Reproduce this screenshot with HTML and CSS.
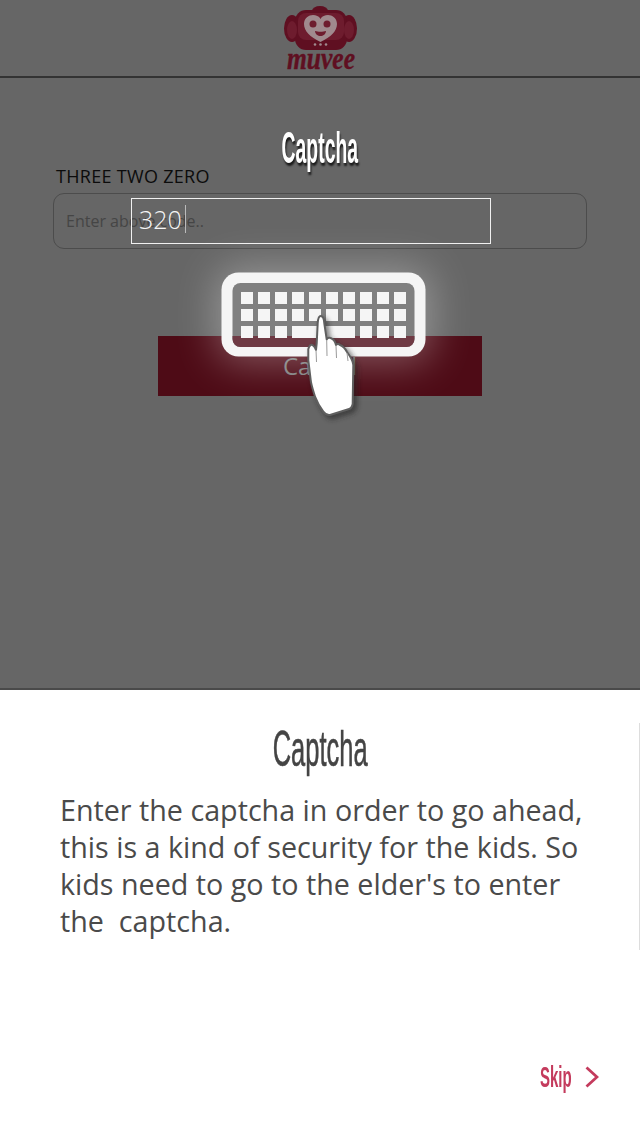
FILE: index.html
```html
<!DOCTYPE html>
<html lang="en">
<head>
<meta charset="utf-8">
<title>Captcha</title>
<link rel="stylesheet" href="styles.css">
</head>
<body>
<div class="screen">
  <section class="stage">
    <header class="topbar">
      <svg class="logo" viewBox="0 0 80 76" width="80" height="76">
        <g fill="#5f0f21">
          <ellipse cx="12" cy="28.500" rx="8" ry="13.500"/>
          <ellipse cx="69" cy="28.500" rx="8" ry="13.500"/>
          <ellipse cx="40" cy="11" rx="8" ry="5"/>
          <rect x="15" y="10" width="52" height="40" rx="11"/>
        </g>
        <g fill="#6e1c2e">
          <ellipse cx="12" cy="30" rx="5" ry="9"/>
          <ellipse cx="69" cy="30" rx="5" ry="9"/>
          <rect x="18" y="13" width="46" height="27" rx="8"/>
        </g>
        <path d="M40.500 42C30 37 24 31 24 24C24 18 29 15 33 15C36 15 39 16 40.500 19C42 16 45 15 48 15C52 15 57 18 57 24C57 31 51 37 40.500 42Z" fill="#a08a8e"/>
        <circle cx="33" cy="24" r="3.500" fill="#6e1c2e"/>
        <circle cx="47" cy="24" r="3.500" fill="#6e1c2e"/>
        <path d="M35 31C38 32 43 32 46 31C46 34 43 36 40.500 36C38 36 35 34 35 31Z" fill="#6e1c2e"/>
        <g fill="#a08a8e"><circle cx="35" cy="44.500" r="1.300"/><circle cx="40.500" cy="44.500" r="1.300"/><circle cx="46" cy="44.500" r="1.300"/></g>
        <text class="logo-word" x="7" y="69" textLength="68" lengthAdjust="spacingAndGlyphs">muvee</text>
      </svg>
    </header>
    <div class="form">
      <h1 class="stage-title"><span class="squeeze">Captcha</span></h1>
      <p class="code-label">THREE TWO ZERO</p>
      <div class="field">Enter above code..</div>
      <div class="submit">Cancel</div>
    </div>
    <div class="typed"><span class="typed-value">320</span><span class="caret"></span></div>
    <svg class="keyboard" viewBox="0 0 240 180" width="240" height="180">
      <defs>
        <filter id="bloom" filterUnits="userSpaceOnUse" x="-80" y="-60" width="400" height="300"><feGaussianBlur stdDeviation="20"/></filter>
        <filter id="soft" filterUnits="userSpaceOnUse" x="70" y="40" width="100" height="140"><feGaussianBlur stdDeviation="2.500"/></filter>
        <path id="hand" d="M111.700 64C113.500 64 115 67 115.300 71.300L117.700 87.300C119 85.500 121 85.500 122 86.300C124 87 126 89 127 93C128 91.500 130 92 131 93C134 94 137 98 138 100C141 104 144 108 144.300 113L143.700 152C143 155 141 157 139.300 157.300L121 163C118 163.500 116 162 114.300 159.700C110 154 108 150 106 144.700C104 138 102 132 101.700 128L99.300 108L99.300 97.300C100 94 102 92 103.500 93C105 94 106.500 96 107 98L107.700 91.300L108.700 71.300C109 67 110 64 111.700 64Z"/>
      </defs>
      <rect x="8" y="16" width="214" height="94" rx="20" fill="#fff" opacity=".32" filter="url(#bloom)"/>
      <rect x="12.500" y="20.500" width="204" height="84" rx="17" fill="#f5f5f5"/>
      <rect x="23.500" y="31" width="182" height="64" rx="8" fill="#808080"/>
      <path d="M23.500 84V87A8 8 0 0 0 31.500 95H197.500A8 8 0 0 0 205.500 87V84Z" fill="#6f3a44"/>
      <g fill="#f5f5f5">
        <rect x="32" y="40" width="12" height="12"/><rect x="49" y="40" width="12" height="12"/><rect x="66" y="40" width="12" height="12"/><rect x="83" y="40" width="12" height="12"/><rect x="100" y="40" width="12" height="12"/><rect x="117" y="40" width="12" height="12"/><rect x="134" y="40" width="12" height="12"/><rect x="151" y="40" width="12" height="12"/><rect x="168" y="40" width="12" height="12"/><rect x="185" y="40" width="12" height="12"/>
        <rect x="32" y="57" width="12" height="12"/><rect x="49" y="57" width="12" height="12"/><rect x="66" y="57" width="12" height="12"/><rect x="83" y="57" width="12" height="12"/><rect x="100" y="57" width="12" height="12"/><rect x="117" y="57" width="12" height="12"/><rect x="134" y="57" width="12" height="12"/><rect x="151" y="57" width="12" height="12"/><rect x="168" y="57" width="12" height="12"/><rect x="185" y="57" width="12" height="12"/>
        <rect x="32" y="74" width="12" height="12"/><rect x="49" y="74" width="12" height="12"/><rect x="66" y="74" width="12" height="12"/><rect x="83" y="74" width="63" height="12"/><rect x="151" y="74" width="12" height="12"/><rect x="168" y="74" width="12" height="12"/><rect x="185" y="74" width="12" height="12"/>
      </g>
      <use href="#hand" fill="#222" stroke="#222" stroke-width="3" transform="translate(3 3)" filter="url(#soft)" opacity=".55"/>
      <use href="#hand" fill="#fff" stroke="#5f5f5f" stroke-width="2" stroke-linejoin="round"/>
      <path d="M117.700 88L118 104M127 94L127.500 106M138 101L139 109M107 98L107.500 110" fill="none" stroke="#9a9a9a" stroke-width="1"/>
    </svg>
  </section>
  <section class="help">
    <h2 class="help-title"><span class="squeeze">Captcha</span></h2>
    <p class="help-text">Enter the captcha in order to go ahead,<br>this is a kind of security for the kids. So<br>kids need to go to the elder's to enter<br>the&nbsp; captcha.</p>
    <div class="skip">
      <span class="skip-label">Skip</span>
      <svg class="chev" viewBox="0 0 14 22" width="14" height="22"><path d="M1.500 1.500L12 11L1.500 20.500" fill="none" stroke="#c43b5d" stroke-width="2.800"/></svg>
    </div>
  </section>
</div>
</body>
</html>
```
FILE: styles.css
```css
* { box-sizing: border-box; }
html, body { margin: 0; padding: 0; }
body { width: 640px; height: 1136px; overflow: hidden; background: #fff; font-family: "Open Sans", "Noto Sans", sans-serif; }
.screen { display: flex; flex-direction: column; height: 1136px; }
.stage { position: relative; height: 690px; flex: none; background: #666; border-bottom: 2px solid #4a4a4a; }
.topbar { height: 78px; border-bottom: 2px solid #333; display: flex; justify-content: center; }
.logo { overflow: visible; }
.logo-word { font-family: "Liberation Serif", serif; font-weight: bold; font-style: italic; font-size: 31px; fill: #5f0f21; stroke: #5f0f21; stroke-width: .4px; }
.form { display: flex; flex-direction: column; align-items: flex-start; padding: 0 53px; }
.stage-title { width: 100%; margin: 46px 0 0; height: 42px; text-align: center; font: bold 44px/48px "Liberation Sans", sans-serif; color: #fff; text-shadow: 2px 3px 3px rgba(0,0,0,.75); }
.squeeze { display: inline-block; transform: scaleX(.44); }
.code-label { margin: 0 0 0 3px; height: 20px; font-size: 18px; line-height: 20px; color: #0c0c0c; letter-spacing: .3px; white-space: nowrap; }
.field { width: 534px; height: 56px; margin-top: 7px; border: 1px solid #4c4c4c; border-radius: 11px; padding-left: 12px; font-size: 16px; line-height: 54px; color: #454545; }
.submit { width: 324px; height: 60px; margin: 87px 0 0 105px; background: #4e0b16; color: #7f7f7f; font-size: 24px; line-height: 60px; text-align: center; }
.typed { position: absolute; left: 131px; top: 198px; width: 360px; height: 46px; border: 1px solid #f0f0f0; padding: 0 0 5px 7px; display: flex; align-items: center; color: #f5f5f5; font-size: 25px; font-weight: 300; }
.caret { width: 1px; height: 28px; margin-left: 3px; background: #bbb; }
.keyboard { position: absolute; left: 209px; top: 252px; overflow: visible; }
.help { position: relative; flex: 1; padding: 0 0 0 60px; }
.help::after { content: ""; position: absolute; right: 0; top: 33px; width: 1px; height: 227px; background: #ddd; }
.help-title { width: 520px; margin: 31px 0 0; height: 56px; text-align: center; font: normal 50px/56px "Liberation Sans", sans-serif; color: #444; -webkit-text-stroke: .6px #444; }
.help-title .squeeze { transform: scaleX(.51); }
.help-text { margin: 14px 0 0; font-size: 28.700px; line-height: 37px; color: #4a4a4a; white-space: nowrap; }
.skip { position: absolute; left: 540px; top: 369px; display: flex; align-items: center; gap: 13px; }
.skip-label { display: inline-block; width: 32px; font: bold 30px/36px "Liberation Sans", sans-serif; color: #c43b5d; transform: scaleX(.5); transform-origin: left center; }
```
